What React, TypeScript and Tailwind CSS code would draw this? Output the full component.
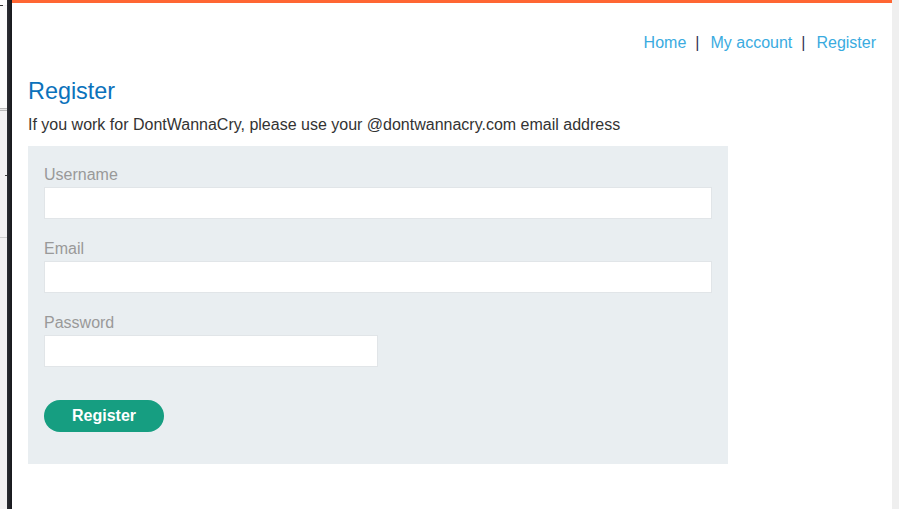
import React from "react";

export default function App() {
  const font = { fontFamily: '"Liberation Sans", Arial, sans-serif' };
  return (
    <div className="flex h-[509px] w-[899px] overflow-hidden bg-white" style={font}>
      {/* left desktop sliver */}
      <div className="flex w-[7px] shrink-0 flex-col bg-[#f2f1f2]">
        <div className="h-[5px] bg-white" />
        <div className="h-px w-[3px] bg-[#333]" />
        <div className="h-[102px] bg-[#fafafa]" />
        <div className="h-px bg-[#b8b8b8]" />
        <div className="h-px bg-[#e8e8e8]" />
        <div className="h-px bg-[#b8b8b8]" />
        <div className="h-[64px]" />
        <div className="flex h-px justify-end">
          <div className="h-px w-[2px] bg-[#444]" />
        </div>
        <div className="h-[61px]" />
        <div className="h-px bg-[#cfcfcf]" />
        <div className="flex-1" />
      </div>
      <div className="w-[5px] shrink-0 bg-gradient-to-r from-[#2b2d33] to-[#17181c]" />

      {/* main page */}
      <div className="flex w-[880px] shrink-0 flex-col border-t-[3px] border-[#ff6633] bg-white px-4">
        <nav className="mt-[28px] flex justify-end text-[16px] leading-[24px]">
          <a className="text-[#3aabdf]">Home</a>
          <span className="ml-[9px] mr-[11px] text-[#333355]">|</span>
          <a className="text-[#3aabdf]">My account</a>
          <span className="ml-[9px] mr-[11px] text-[#333355]">|</span>
          <a className="text-[#3aabdf]">Register</a>
        </nav>

        <h1 className="mt-[22px] text-[23.4px] leading-[28px] font-normal text-[#0b72bb]">Register</h1>
        <p className="mt-[8px] text-[16px] leading-[24px] text-[#333]">
          If you work for DontWannaCry, please use your @dontwannacry.com email address
        </p>

        <form className="mt-[9px] flex w-[700px] flex-col bg-[#e9eef1] px-4 pt-[17px] pb-[32px]">
          <label className="text-[16px] leading-[24px] text-[#999]">Username</label>
          <input className="h-[32px] w-full border border-[#e1e5e8] bg-white" />
          <label className="mt-[18px] text-[16px] leading-[24px] text-[#999]">Email</label>
          <input className="h-[32px] w-full border border-[#e1e5e8] bg-white" />
          <label className="mt-[18px] text-[16px] leading-[24px] text-[#999]">Password</label>
          <input type="password" className="h-[32px] w-[334px] border border-[#e1e5e8] bg-white" />
          <button
            type="button"
            className="mt-[33px] h-[32px] w-[120px] rounded-full bg-[#169e81] text-[16px] font-bold text-white"
          >
            Register
          </button>
        </form>
      </div>

      {/* right sliver */}
      <div className="w-[7px] shrink-0 bg-[#efefef]" />
    </div>
  );
}
